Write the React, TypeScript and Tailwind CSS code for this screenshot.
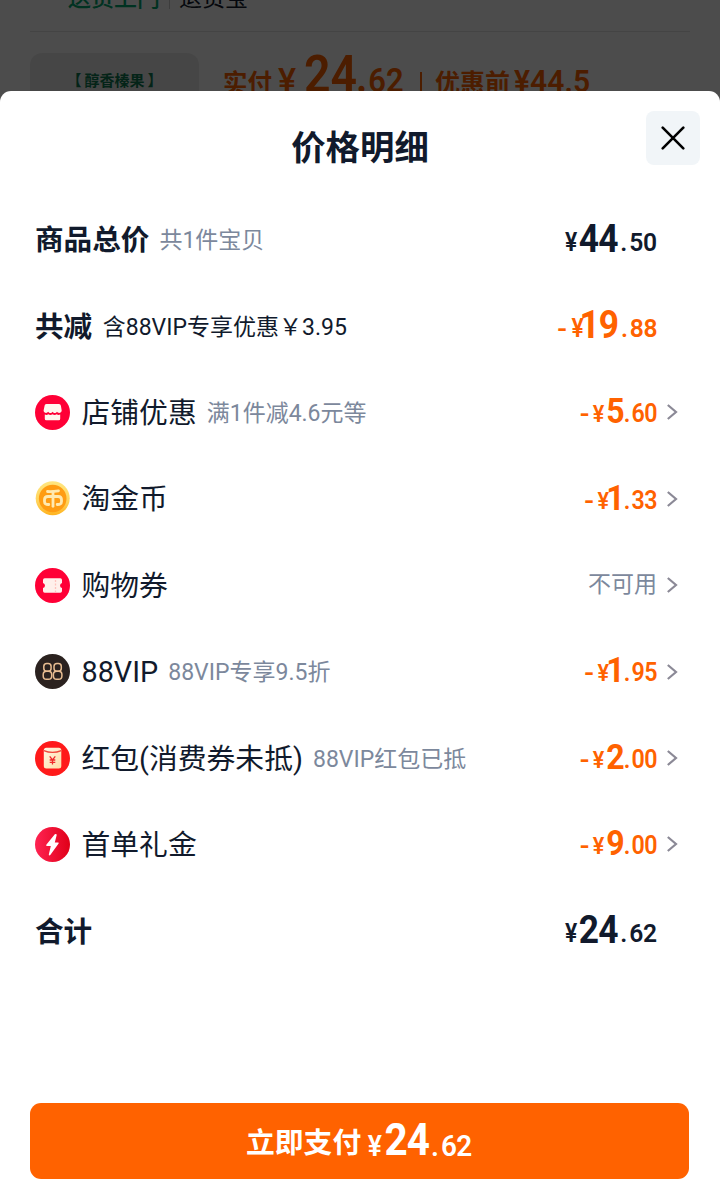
import type { ReactNode } from 'react';

type PriceSize = 'xl' | 'lg' | 'md';

const PRICE_STYLES: Record<
  PriceSize,
  { root: string; minus: string; yen: string; whole: string; one: string; fraction: string; dot: string }
> = {
  xl: {
    root: '-ml-[3px] pb-px',
    minus: 'text-[30px]',
    yen: 'text-[30px] w-[20px] translate-y-px',
    whole: 'text-[43.5px] tracking-[-1px]',
    one: '-ml-2',
    fraction: 'text-[30px] ml-[2px] tracking-[-0.8px] translate-y-px',
    dot: 'mr-[3px]',
  },
  lg: {
    root: 'pb-[2px]',
    minus: 'text-[26px] mr-[4px]',
    yen: 'text-[26px] w-[15px] -translate-y-px',
    whole: 'text-[38px] tracking-[-1px]',
    one: '-ml-[6px]',
    fraction: 'text-[26.5px] ml-[3px] tracking-[-0.4px] -translate-y-px',
    dot: 'mr-[2.5px]',
  },
  md: {
    root: 'pb-[2px]',
    minus: 'text-[26px] mr-[3px]',
    yen: 'text-[24.5px] w-[15px] -translate-y-px',
    whole: 'text-[34.5px] tracking-[-1px]',
    one: '-ml-[5px]',
    fraction: 'text-[25px] tracking-[-0.5px] -translate-y-px',
    dot: 'mr-[1.5px]',
  },
};

function Price({
  value,
  size = 'md',
  negative = false,
}: {
  value: string;
  size?: PriceSize;
  negative?: boolean;
}) {
  const [whole, fraction] = value.split('.');
  const s = PRICE_STYLES[size];
  return (
    <span className="flex origin-right scale-x-93 items-baseline whitespace-nowrap font-[Roboto,sans-serif] font-semibold leading-none">
      <span className={`flex items-baseline ${s.root}`}>
        {negative && (
          <span className={s.minus}>
            <span className="inline-block origin-right scale-x-115">-</span>
          </span>
        )}
        <span className={s.yen}>
          <span className="inline-block origin-left scale-x-95">¥</span>
        </span>
        <span className={`font-bold ${s.whole}`}>
          <span className={whole.startsWith('1') ? s.one : ''}>{whole}</span>
        </span>
        <span className={s.fraction}>
          <span className={s.dot}>.</span>
          {fraction}
        </span>
      </span>
    </span>
  );
}

function Chevron() {
  return (
    <svg className="h-[18px] w-3" viewBox="0 0 12 18" fill="none">
      <path d="M.8 2 9 9 .8 16" stroke="#8b8996" strokeWidth="2.2" />
    </svg>
  );
}

function StoreIcon() {
  return (
    <svg className="size-[35px]" viewBox="0 0 35 35">
      <circle cx="17.5" cy="17.5" r="17.5" fill="#ff0036" />
      <path
        d="M11.500 9h12.500q1.600 0 1.900 1.800l.8 4.700c0 2.600-3.600 3.200-4.700 1.300-1.100 1.700-3.400 1.700-4.400 0-1 1.700-3.300 1.700-4.400 0-1.200 1.900-4.600 1.300-4.600-1.300l1-4.700Q9.500 9 11.500 9Z"
        fill="#fff6ee"
      />
      <path d="M9.800 19.500c1.300.7 2.500.5 3.500-.3 1.200.9 3 .9 4.200 0 1.200.9 3 .9 4.200 0 1 .8 2.200 1 3.500.3v4.200q0 1.500-1.500 1.500H11.300q-1.500 0-1.500-1.500Z" fill="#fff6ee" />
    </svg>
  );
}

function CoinIcon() {
  return (
    <svg className="size-[35px]" viewBox="0 0 35 35">
      <defs>
        <linearGradient id="coin-rim" x1="0" y1="0" x2="0" y2="1">
          <stop offset="0" stopColor="#ffe680" />
          <stop offset="0.6" stopColor="#ffd35a" />
          <stop offset="1" stopColor="#ffb31f" />
        </linearGradient>
      </defs>
      <circle cx="17.7" cy="17.2" r="17" fill="url(#coin-rim)" />
      <circle cx="17.7" cy="17.5" r="13.8" fill="#ff9c12" />
      <g fill="none" stroke="#ffe9b0" strokeWidth="2.8" strokeLinecap="round" strokeLinejoin="round">
        <path d="M12.500 10.500c4 .3 7.500-.1 11-.7" />
        <path d="M18 10.800v14.500" />
        <path d="M13.800 23.500q-4.300.2-4.300-3v-1.700q0-3.300 3.300-3.300h10.400q3.300 0 3.300 3.300v1.700q0 3.200-4.300 3" />
      </g>
    </svg>
  );
}

function TicketIcon() {
  return (
    <svg className="size-[35px]" viewBox="0 0 35 35">
      <circle cx="17.5" cy="17.5" r="17.5" fill="#ff0036" />
      <path
        d="M9.700 10.300h15.600q1.700 0 1.700 1.700v2.900a2.700 2.700 0 0 0 0 5.200v3q0 1.700-1.700 1.700H9.700q-1.700 0-1.700-1.700v-3a2.700 2.700 0 0 0 0-5.200V12q0-1.700 1.700-1.700Z"
        fill="#fff0eb"
      />
      <path d="M20.500 12v12" stroke="#ffc3bd" strokeWidth="1.300" strokeDasharray="2 1.500" />
    </svg>
  );
}

function VipIcon() {
  return (
    <svg className="size-[35px]" viewBox="0 0 35 35">
      <circle cx="17.5" cy="17.5" r="17.5" fill="#2b221f" />
      <g fill="none" stroke="#e8bd91" strokeWidth="1.500">
        <rect x="8.800" y="9.600" width="7.300" height="7.600" rx="3" />
        <rect x="8.200" y="17.200" width="8.500" height="8" rx="3.300" />
        <rect x="19" y="9.600" width="7.300" height="7.600" rx="3" />
        <rect x="18.400" y="17.200" width="8.500" height="8" rx="3.300" />
      </g>
    </svg>
  );
}

function RedPacketIcon() {
  return (
    <svg className="size-[35px]" viewBox="0 0 35 35">
      <defs>
        <linearGradient id="packet" x1="0" y1="0" x2="1" y2="1">
          <stop offset="0" stopColor="#fff6e3" />
          <stop offset="1" stopColor="#ffdda6" />
        </linearGradient>
      </defs>
      <circle cx="17.5" cy="17.5" r="17.5" fill="#ff1a1a" />
      <rect x="8.800" y="6.800" width="17.500" height="20.800" rx="2.500" fill="url(#packet)" />
      <path d="M8.800 9.600q8.700 3.600 17.500 0" fill="none" stroke="#f0453a" strokeWidth="1.200" />
      <path d="m14.700 15.300 2.800 3.700 2.800-3.700M17.500 19v4.500M14.700 19h5.600M14.700 21.400h5.600" fill="none" stroke="#f02a2a" strokeWidth="1.300" />
    </svg>
  );
}

function BoltIcon() {
  return (
    <svg className="size-[35px]" viewBox="0 0 35 35">
      <defs>
        <linearGradient id="bolt" x1="0" y1="0" x2="1" y2="0">
          <stop offset="0" stopColor="#ff2352" />
          <stop offset="1" stopColor="#e00018" />
        </linearGradient>
      </defs>
      <circle cx="17.5" cy="17.5" r="17.5" fill="url(#bolt)" />
      <path
        d="M19.800 7.300 11.300 17.800q-.7 1.100.6 1.200h3.900l-2 8.400q0 1.700 1.500.7l8.300-11.600q.6-1-.6-1.100h-3.200l1.900-7.300q0-1.600-1.900-.8Z"
        fill="#fff"
      />
    </svg>
  );
}

function Row({
  icon,
  label,
  note,
  strong = false,
  darkNote = false,
  chevron = false,
  children,
}: {
  icon?: ReactNode;
  label: string;
  note?: string;
  strong?: boolean;
  darkNote?: boolean;
  chevron?: boolean;
  children: ReactNode;
}) {
  return (
    <div className="flex h-[86.4px] items-center pl-[35px] pr-[41px]">
      {icon && <span className="mr-[11.5px] shrink-0">{icon}</span>}
      <span
        className={
          strong ? 'pt-[2px] text-[28.6px] font-bold leading-none' : 'pt-[2px] text-[28.8px] leading-none'
        }
      >
        {label}
      </span>
      {note && (
        <span
          className={
            darkNote
              ? 'ml-[10.5px] pt-[2px] text-[23px] leading-none'
              : 'ml-[10px] pt-[2px] text-[23px] leading-none text-[#7c889c]'
          }
        >
          {note}
        </span>
      )}
      <div className="ml-auto">{children}</div>
      <div className="ml-[10px] w-3">{chevron && <Chevron />}</div>
    </div>
  );
}

// Order page that stays visible, dimmed, above the sheet
function OrderBackdrop() {
  return (
    <div className="relative h-[106px] shrink-0 overflow-hidden bg-white">
      <div className="mx-[30px] flex h-8 items-start border-b border-[#e5e5e5] pl-[38px]">
        <div className="-mt-[14px] flex items-center text-[23px] leading-[26px]">
          <span className="font-medium text-[#00a870]">送货上门</span>
          <span className="mx-[9px] h-5 w-px bg-[#ccc]" />
          <span>退货宝</span>
        </div>
      </div>
      <div className="flex px-[30px] pt-[21px]">
        <div className="h-20 w-[169px] shrink-0 rounded-xl bg-[#ececec] pt-[19px] text-center font-['Noto_Sans_CJK_SC',sans-serif] text-[15px] font-bold leading-4 text-[#0f7a52]">
          【&thinsp;醇香榛果&thinsp;】
        </div>
        <div className="-mt-px ml-6 flex items-baseline whitespace-nowrap font-semibold leading-[46px] text-[#ff6200]">
          <span className="text-[24.5px]">实付</span>
          <span className="ml-[6px] w-[21px] text-[34px] font-medium">¥</span>
          <span className="ml-[5px] w-[52px] text-[51px]">
            <span className="inline-block origin-left scale-x-91">24</span>
          </span>
          <span className="w-[49px] text-[34px]">
            <span className="inline-block origin-left scale-x-91">
              <span className="mr-px text-[44px] leading-none">.</span>62
            </span>
          </span>
          <span className="ml-[15px] mr-[13px] mt-[20px] h-5 w-[2px] self-start bg-[#ff6200]" />
          <span className="text-[25px]">优惠前</span>
          <span className="ml-[4px] inline-block origin-left scale-x-97 text-[31px]">¥44.5</span>
        </div>
      </div>
      <div className="absolute inset-0 bg-black/70" />
    </div>
  );
}

export default function App() {
  return (
    <div className="flex h-[1190px] w-[720px] flex-col overflow-hidden bg-white font-[Roboto,'Noto_Sans_CJK_SC',sans-serif] text-[#111a2c]">
      <OrderBackdrop />
      <section className="relative -mt-[15px] flex flex-1 flex-col rounded-t-[11px] bg-white">
        <header className="grid h-[105.5px] shrink-0 grid-cols-[1fr_auto_1fr] pt-5">
          <span />
          <h2 className="pt-[19px] text-[34.4px] font-bold leading-[36px]">价格明细</h2>
          <button className="mr-5 flex size-[54px] items-center justify-center justify-self-end rounded-lg bg-[#f1f5f8]">
            <svg className="size-6" viewBox="0 0 24 24" fill="none" stroke="#000" strokeWidth="2.6" strokeLinecap="round">
              <path d="m1.700 1.700 20.600 20.600M22.300 1.700 1.700 22.300" />
            </svg>
          </button>
        </header>

        <Row label="商品总价" note="共1件宝贝" strong>
          <Price value="44.50" size="lg" />
        </Row>
        <Row label="共减" note="含88VIP专享优惠￥3.95" strong darkNote>
          <div className="text-[#ff6200]">
            <Price value="19.88" size="lg" negative />
          </div>
        </Row>
        <Row icon={<StoreIcon />} label="店铺优惠" note="满1件减4.6元等" chevron>
          <div className="text-[#ff6200]">
            <Price value="5.60" negative />
          </div>
        </Row>
        <Row icon={<CoinIcon />} label="淘金币" chevron>
          <div className="text-[#ff6200]">
            <Price value="1.33" negative />
          </div>
        </Row>
        <Row icon={<TicketIcon />} label="购物券" chevron>
          <span className="text-[23px] text-[#7c889c]">不可用</span>
        </Row>
        <Row icon={<VipIcon />} label="88VIP" note="88VIP专享9.5折" chevron>
          <div className="text-[#ff6200]">
            <Price value="1.95" negative />
          </div>
        </Row>
        <Row icon={<RedPacketIcon />} label="红包(消费券未抵)" note="88VIP红包已抵" chevron>
          <div className="text-[#ff6200]">
            <Price value="2.00" negative />
          </div>
        </Row>
        <Row icon={<BoltIcon />} label="首单礼金" chevron>
          <div className="text-[#ff6200]">
            <Price value="9.00" negative />
          </div>
        </Row>
        <Row label="合计" strong>
          <Price value="24.62" size="lg" />
        </Row>

        <button className="mb-[11px] ml-[30px] mr-[31px] mt-auto flex h-[76px] items-center rounded-[11px] bg-[#ff6200] pl-[216px] text-white">
          <span className="pt-1 text-[28.8px] font-bold leading-none">立即支付</span>
          <Price value="24.62" size="xl" />
        </button>
      </section>
    </div>
  );
}
